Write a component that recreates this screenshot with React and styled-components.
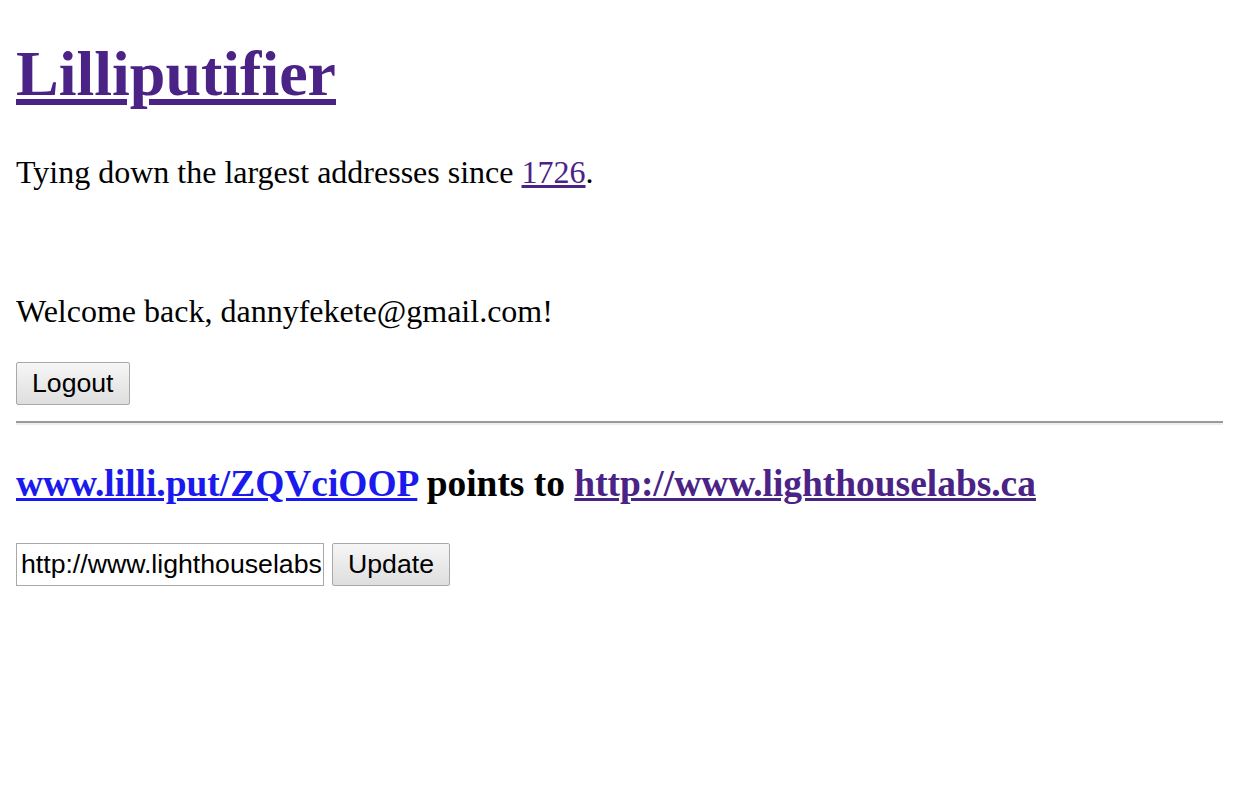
import React from 'react';
import styled, { createGlobalStyle } from 'styled-components';

const GlobalStyle = createGlobalStyle`
  html {
    background: #fff;
    overflow: hidden;
  }
  body {
    margin: 16px;
    font-family: "Liberation Serif", "Times New Roman", serif;
    font-size: 32px;
    color: #000;
  }
`;

const Link = styled.a`
  color: ${props => (props.$visited ? '#4b2386' : '#1a1aee')};
  text-decoration: underline;
  cursor: pointer;
`;

const Title = styled.h1`
  font-size: 64px;
  font-weight: bold;
  margin: 21px 0 42.88px;
`;

const Tagline = styled.p`
  margin: 32px 0;
`;

const Session = styled.section`
  margin-top: 102px;
`;

const Welcome = styled.p`
  margin: 32px 0;
`;

const Form = styled.form`
  display: flex;
  align-items: center;
  gap: 8px;
  margin: 0;
`;

const Button = styled.button`
  font-family: "Liberation Sans", Arial, sans-serif;
  font-size: 26.67px;
  height: 43px;
  padding: 0 15px;
  color: #000;
  border: 1px solid #a9a9a9;
  border-radius: 2px;
  background: linear-gradient(#f6f6f6, #dedede);
`;

const Rule = styled.div`
  height: 4px;
  margin: 16px -16px 0 0;
  border-top: 2px solid #9a9a9a;
  border-bottom: 2px solid #eeeeee;
  box-sizing: border-box;
`;

const Mapping = styled.h3`
  font-size: 37.44px;
  font-weight: bold;
  margin: 37.44px 0;
`;

const UrlInput = styled.input`
  font-family: "Liberation Sans", Arial, sans-serif;
  font-size: 26.67px;
  width: 308px;
  height: 43px;
  box-sizing: border-box;
  padding: 2px 0 2px 4px;
  border: 1px solid #a9a9a9;
  color: #000;
`;

export default function App() {
  return (
    <>
      <GlobalStyle />
      <header>
        <Title>
          <Link $visited href="#">Lilliputifier</Link>
        </Title>
        <Tagline>
          Tying down the largest addresses since <Link $visited href="#">1726</Link>.
        </Tagline>
      </header>
      <Session>
        <Welcome>Welcome back, dannyfekete@gmail.com!</Welcome>
        <Form onSubmit={e => e.preventDefault()}>
          <Button type="submit">Logout</Button>
        </Form>
      </Session>
      <Rule role="separator" />
      <main>
        <Mapping>
          <Link href="#">www.lilli.put/ZQVciOOP</Link> points to{' '}
          <Link $visited href="#">http://www.lighthouselabs.ca</Link>
        </Mapping>
        <Form onSubmit={e => e.preventDefault()}>
          <UrlInput defaultValue="http://www.lighthouselabs.ca" />
          <Button type="submit">Update</Button>
        </Form>
      </main>
    </>
  );
}
